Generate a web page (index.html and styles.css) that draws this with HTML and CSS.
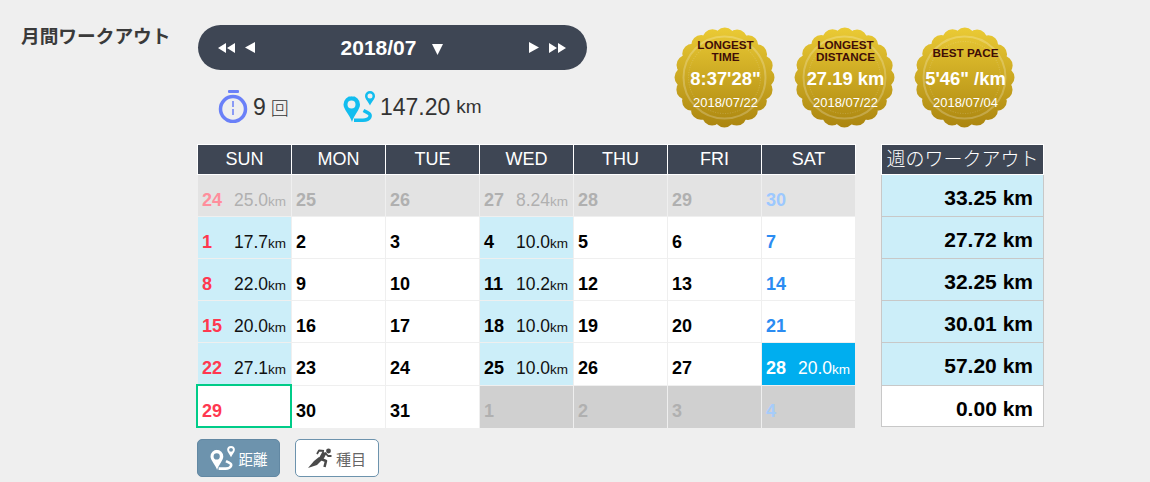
FILE: index.html
```html
<!DOCTYPE html>
<html lang="ja">
<head>
<meta charset="utf-8">
<title>月間ワークアウト</title>
<link rel="stylesheet" href="styles.css">
</head>
<body>
<svg class="defs" width="0" height="0" aria-hidden="true">
  <defs>
    <linearGradient id="gold" gradientUnits="userSpaceOnUse" x1="0" y1="0" x2="0" y2="101">
      <stop offset="0" stop-color="#ebcb35"/>
      <stop offset="1" stop-color="#ab850f"/>
    </linearGradient>
    <symbol id="route" viewBox="0 0 32 31">
      <path fill="currentColor" fill-rule="evenodd" d="M8.500 5a8.500 8.500 0 0 1 8.500 8.500c0 5-6 10.500-8 17.500c-2-7-8.500-12.500-8.500-17.500a8.500 8.500 0 0 1 8.500-8.500zM8.500 9.500a4 4 0 1 0 0 8a4 4 0 0 0 0-8z"/>
      <path fill="currentColor" fill-rule="evenodd" d="M27 0a5 5 0 0 1 5 5c0 3-3.500 6-5 9.500c-1.500-3.500-5-6.500-5-9.500a5 5 0 0 1 5-5zM27 2.500a2.500 2.500 0 1 0 0 5a2.500 2.500 0 0 0 0-5z"/>
      <path fill="none" stroke="currentColor" stroke-width="3.500" d="M11 29.200H20C27.500 29.200 29 23.500 25 21.800L20.500 19.500"/>
    </symbol>
    <symbol id="runner" viewBox="0 0 24 20">
      <circle cx="20.500" cy="3" r="2.400" fill="currentColor"/>
      <path fill="currentColor" d="M15 11L9 17L0 20L6 13L11 9z"/>
      <g fill="none" stroke="currentColor" stroke-linejoin="round">
        <path stroke-width="4.500" d="M16.500 4.500L13 11"/>
        <path stroke-width="1.800" d="M17 4.500L20 8L23.500 8M16 3L11 2.500L9 6"/>
        <path stroke-width="2.500" d="M13 11L18 13L16.500 19"/>
      </g>
    </symbol>
    <symbol id="medal" viewBox="0 0 101 101">
      <circle cx="50.500" cy="50.500" r="44" fill="url(#gold)"/>
      <circle cx="50.500" cy="50.500" r="40" fill="none" stroke="url(#gold)" stroke-width="20" stroke-linecap="round" stroke-dasharray="0 12.566"/>
      <circle cx="50.500" cy="50.500" r="41" fill="none" stroke="#fff" stroke-opacity=".22" stroke-width="2"/>
      <circle cx="50.500" cy="50.500" r="36" fill="none" stroke="#fff" stroke-opacity=".3" stroke-width=".6" stroke-dasharray="1 1.500"/>
    </symbol>
  </defs>
</svg>
<main class="page">
  <h1 class="title">月間ワークアウト</h1>
  <div class="content">
    <section class="top">
      <div class="summary">
        <nav class="month-nav">
          <div class="arrows">
            <svg class="arrow-double" viewBox="0 0 17 10"><path d="M8 0v10L0 5zM17 0v10L9 5z"/></svg>
            <svg class="arrow-single" viewBox="0 0 10 11"><path d="M10 0v11L0 5.500z"/></svg>
          </div>
          <div class="month-label"><span class="month-text">2018/07</span><svg class="arrow-down" viewBox="0 0 11 11"><path d="M0 0h11L5.500 11z"/></svg></div>
          <div class="arrows">
            <svg class="arrow-single" viewBox="0 0 10 11"><path d="M0 0v11l10-5.500z"/></svg>
            <svg class="arrow-double" viewBox="0 0 17 10"><path d="M0 0v10l8-5zM9 0v10l8-5z"/></svg>
          </div>
        </nav>
        <div class="stats">
          <div class="stat stat-count">
            <svg class="icon-timer" viewBox="0 0 30 33">
              <rect x="10" y="0" width="11" height="3" rx="1"/>
              <circle cx="15" cy="19" r="12.500" class="timer-ring"/>
              <path d="M15 11v15" class="timer-hand"/>
            </svg>
            <span class="stat-num">9</span><span class="stat-unit-ja">回</span>
          </div>
          <div class="stat stat-dist">
            <svg class="icon-route"><use href="#route"/></svg>
            <span class="stat-num">147.20</span><span class="stat-unit">km</span>
          </div>
        </div>
      </div>
      <div class="medals">
        <div class="medal">
          <svg class="medal-bg"><use href="#medal"/></svg>
          <div class="medal-label">LONGEST<br>TIME</div>
          <div class="medal-value">8:37'28"</div>
          <div class="medal-date">2018/07/22</div>
        </div>
        <div class="medal">
          <svg class="medal-bg"><use href="#medal"/></svg>
          <div class="medal-label">LONGEST<br>DISTANCE</div>
          <div class="medal-value">27.19 km</div>
          <div class="medal-date">2018/07/22</div>
        </div>
        <div class="medal">
          <svg class="medal-bg"><use href="#medal"/></svg>
          <div class="medal-label medal-label-single">BEST PACE</div>
          <div class="medal-value">5'46" /km</div>
          <div class="medal-date">2018/07/04</div>
        </div>
      </div>
    </section>
    <section class="tables">
      <div class="calendar">
        <div class="cal-head">
          <div>SUN</div><div>MON</div><div>TUE</div><div>WED</div><div>THU</div><div>FRI</div><div>SAT</div>
        </div>
        <div class="cal-body">
          <div class="cell prev"><span class="day sun">24</span><span class="dist">25.0<small>km</small></span></div>
          <div class="cell prev"><span class="day">25</span></div>
          <div class="cell prev"><span class="day">26</span></div>
          <div class="cell prev"><span class="day">27</span><span class="dist">8.24<small>km</small></span></div>
          <div class="cell prev"><span class="day">28</span></div>
          <div class="cell prev"><span class="day">29</span></div>
          <div class="cell prev"><span class="day sat">30</span></div>

          <div class="cell run"><span class="day sun">1</span><span class="dist">17.7<small>km</small></span></div>
          <div class="cell"><span class="day">2</span></div>
          <div class="cell"><span class="day">3</span></div>
          <div class="cell run"><span class="day">4</span><span class="dist">10.0<small>km</small></span></div>
          <div class="cell"><span class="day">5</span></div>
          <div class="cell"><span class="day">6</span></div>
          <div class="cell"><span class="day sat">7</span></div>

          <div class="cell run"><span class="day sun">8</span><span class="dist">22.0<small>km</small></span></div>
          <div class="cell"><span class="day">9</span></div>
          <div class="cell"><span class="day">10</span></div>
          <div class="cell run"><span class="day">11</span><span class="dist">10.2<small>km</small></span></div>
          <div class="cell"><span class="day">12</span></div>
          <div class="cell"><span class="day">13</span></div>
          <div class="cell"><span class="day sat">14</span></div>

          <div class="cell run"><span class="day sun">15</span><span class="dist">20.0<small>km</small></span></div>
          <div class="cell"><span class="day">16</span></div>
          <div class="cell"><span class="day">17</span></div>
          <div class="cell run"><span class="day">18</span><span class="dist">10.0<small>km</small></span></div>
          <div class="cell"><span class="day">19</span></div>
          <div class="cell"><span class="day">20</span></div>
          <div class="cell"><span class="day sat">21</span></div>

          <div class="cell run"><span class="day sun">22</span><span class="dist">27.1<small>km</small></span></div>
          <div class="cell"><span class="day">23</span></div>
          <div class="cell"><span class="day">24</span></div>
          <div class="cell run"><span class="day">25</span><span class="dist">10.0<small>km</small></span></div>
          <div class="cell"><span class="day">26</span></div>
          <div class="cell"><span class="day">27</span></div>
          <div class="cell selected"><span class="day">28</span><span class="dist">20.0<small>km</small></span></div>

          <div class="cell today"><span class="day sun">29</span></div>
          <div class="cell"><span class="day">30</span></div>
          <div class="cell"><span class="day">31</span></div>
          <div class="cell next"><span class="day">1</span></div>
          <div class="cell next"><span class="day">2</span></div>
          <div class="cell next"><span class="day">3</span></div>
          <div class="cell next"><span class="day sat">4</span></div>
        </div>
      </div>
      <div class="weeks">
        <div class="week-head">週のワークアウト</div>
        <div class="week-body">
          <div class="week">33.25 km</div>
          <div class="week">27.72 km</div>
          <div class="week">32.25 km</div>
          <div class="week">30.01 km</div>
          <div class="week">57.20 km</div>
          <div class="week week-empty">0.00 km</div>
        </div>
      </div>
    </section>
    <div class="modes">
      <button class="mode mode-on"><svg class="mode-route"><use href="#route"/></svg>距離</button>
      <button class="mode"><svg class="mode-runner"><use href="#runner"/></svg>種目</button>
    </div>
  </div>
</main>
</body>
</html>
```

FILE: styles.css
```css
* { box-sizing: border-box; }
html, body { margin: 0; height: 100%; }
body {
  background: #efefef;
  font-family: "Liberation Sans", "Noto Sans CJK JP", sans-serif;
  color: #333;
  overflow: hidden;
}
.defs { display: block; height: 0; }
.page { display: flex; align-items: flex-start; padding-top: 25px; }
.title {
  width: 197px;
  margin: 0;
  padding: 0 0 0 21px;
  font-size: 18.700px;
  line-height: 24px;
  font-weight: 700;
  color: #3a3a3a;
  white-space: nowrap;
}
.content { width: 860px; }

.top { display: flex; height: 119px; }
.summary { width: 390px; margin-right: 87px; }
.month-nav {
  height: 45px;
  width: 389px;
  margin-left: 1px;
  padding: 0 21px 0 20px;
  display: flex;
  align-items: center;
  justify-content: space-between;
  background: #3e4654;
  border-radius: 23px;
  color: #fff;
}
.arrows { display: flex; align-items: center; gap: 10px; }
.arrows svg { fill: #fff; display: block; }
.arrow-double { width: 17px; height: 10px; }
.arrow-single { width: 10px; height: 11px; }
.month-label { display: flex; align-items: center; }
.month-text { font-size: 21px; font-weight: 700; }
.arrow-down { width: 11px; height: 11px; margin-left: 16px; fill: #fff; margin-top: 3px; }

.stats { display: flex; margin-top: 20px; padding-left: 21px; height: 33px; }
.stat { display: flex; align-items: center; color: #333; }
.stat-count { width: 125px; }
.icon-timer { width: 30px; height: 33px; margin-right: 5px; fill: #6a80f8; }
.timer-ring { fill: none; stroke: #6a80f8; stroke-width: 3.500; }
.timer-hand { fill: none; stroke: #6a80f8; stroke-width: 1.500; stroke-dasharray: 6 2; }
.stat-num { font-size: 23px; position: relative; top: 1px; }
.stat-unit-ja { font-size: 18px; margin-left: 5px; font-family: "Noto Sans CJK JP", sans-serif; font-weight: 300; }
.stat-unit { font-size: 19px; margin-left: 6px; }
.icon-route { width: 32px; height: 31px; margin-right: 5px; color: #12bdef; }

.medals { display: flex; gap: 19px; margin-top: 2px; }
.medal {
  position: relative;
  width: 101px;
  height: 101px;
  display: flex;
  flex-direction: column;
  align-items: center;
  padding: 11px 0 0 2px;
}
.medal-bg { position: absolute; inset: 0; width: 101px; height: 101px; }
.medal-label {
  position: relative;
  height: 26px;
  display: flex;
  align-items: center;
  justify-content: center;
  text-align: center;
  font-size: 11.700px;
  line-height: 12px;
  font-weight: 700;
  color: #3f0d07;
}
.medal-label-single { padding-top: 4px; }
.medal-value {
  position: relative;
  margin-top: 3px;
  font-size: 18.400px;
  line-height: 24px;
  font-weight: 700;
  color: #fff;
  white-space: nowrap;
}
.medal-date {
  position: relative;
  margin-top: 4px;
  font-size: 13px;
  line-height: 16px;
  color: #fff;
}

.tables { display: flex; align-items: flex-start; }
.calendar { width: 659px; }
.cal-head {
  display: grid;
  grid-template-columns: repeat(7, 93px);
  gap: 1px;
  background: #fff;
  padding: 1px;
  height: 31px;
}
.cal-head div {
  background: #3e4654;
  color: #fff;
  font-size: 18px;
  line-height: 29px;
  text-align: center;
}
.cal-body {
  display: grid;
  grid-template-columns: repeat(7, 93px);
  grid-template-rows: repeat(4, 41px) 42px 42px;
  gap: 1px;
  padding: 0 1px;
}
.cell {
  position: relative;
  background: #fff;
  display: flex;
  justify-content: space-between;
  align-items: baseline;
  padding: 14px 5px 0 4px;
  color: #000;
}
.day { font-size: 18px; line-height: 22px; font-weight: 700; }
.dist { font-size: 17.500px; line-height: 22px; color: #111; }
.dist small { font-size: 13.500px; }
.sun { color: #ff3850; }
.sat { color: #2b8cf2; }
.run { background: #cceef9; }
.prev { background: #e3e3e3; color: #b0b0b0; }
.prev .dist { color: #b0b0b0; }
.prev .sun { color: #ff8e9c; }
.prev .sat { color: #9cc8ff; }
.next { background: #d0d0d0; color: #b0b0b0; }
.next .sat { color: #a6ccfa; }
.selected { background: #00aeef; color: #fff; }
.selected .dist { color: #fff; }
.today::after {
  content: "";
  position: absolute;
  inset: -2px -1px 0 -2px;
  border: 2px solid #00cc88;
}

.weeks { width: 163px; margin-left: 25px; }
.week-head {
  height: 31px;
  background: #3e4654;
  border: 1px solid #fff;
  color: #fff;
  font-family: "Noto Sans CJK JP", sans-serif;
  font-weight: 300;
  font-size: 19px;
  line-height: 26px;
  text-align: center;
  white-space: nowrap;
}
.week-body {
  display: grid;
  grid-template-rows: repeat(4, 42px) 43px 40px;
  border: 1px solid #c8c8c8;
  border-top: 0;
  width: 163px;
}
.week {
  background: #cceef9;
  border-bottom: 1px solid #c8c8c8;
  font-size: 21px;
  font-weight: 700;
  color: #000;
  text-align: right;
  padding: 12px 10px 0 0;
  line-height: 22px;
}
.week-empty { background: #fff; border-bottom: 0; }

.modes { display: flex; gap: 15px; margin-top: 11px; }
.mode {
  width: 84px;
  height: 38px;
  display: flex;
  align-items: center;
  justify-content: center;
  gap: 4px;
  background: #fff;
  border: 1px solid #6d93ad;
  border-radius: 5px;
  font-family: "Noto Sans CJK JP", sans-serif;
  font-size: 15px;
  color: #666;
  padding: 0;
}
.mode-on { width: 83px; background: #6d93ad; color: #fff; border-color: #6288a3; font-size: 14.500px; }
.mode-route { width: 25px; height: 24px; color: #fff; }
.mode-runner { width: 24px; height: 20px; color: #4a4a4a; }
```
